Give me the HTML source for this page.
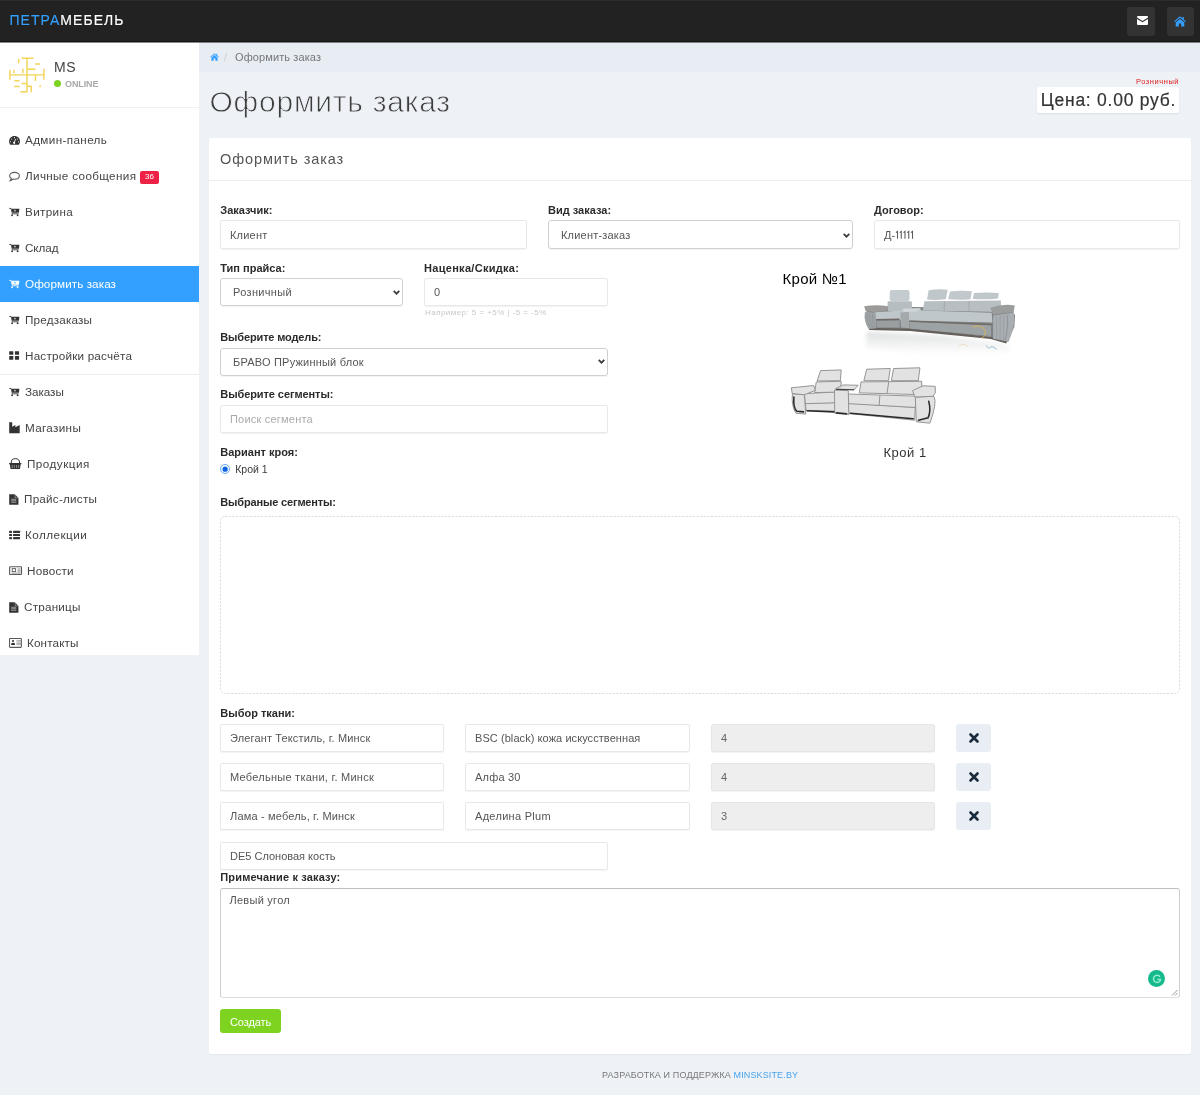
<!DOCTYPE html>
<html lang="ru">
<head>
<meta charset="utf-8">
<title>Оформить заказ</title>
<style>
*{box-sizing:border-box;margin:0;padding:0}
html,body{width:1200px;height:1095px;overflow:hidden}
body{font-family:"Liberation Sans",sans-serif;background:#eef2f6;color:#444;position:relative;font-size:12px}
.abs{position:absolute}
svg{position:absolute;overflow:visible}
.t{position:absolute;white-space:nowrap}
#nav{left:0;top:0;width:1200px;height:42px;background:#222;border-bottom:1px solid #151515;border-top:1px solid #2b2b2b}
#brand{left:9.400px;top:12px;font-size:14px;color:#fff;letter-spacing:1.050px;-webkit-text-stroke:.15px;line-height:16px;white-space:nowrap}
#brand b{font-weight:400;color:#33a0ff}
.nbtn{top:7px;width:28px;height:29px;background:#333;border-radius:3px}
#side{left:0;top:42px;width:199px;height:613px;background:#fff}
#crumb{left:199px;top:42px;width:1001px;height:29px;background:#e8ecf3;border-bottom:1px solid #ebeff5;height:30px}
#title{left:209.500px;top:84px;font-size:30px;line-height:36px;color:#3d3d3d;-webkit-text-stroke:.8px #eef2f6;white-space:nowrap;font-weight:400;letter-spacing:.75px}
#card{left:209px;top:138px;width:982px;height:916px;background:#fff;border-radius:2px;box-shadow:0 1px 1px rgba(0,0,0,.05)}
#cardh{left:0;top:0;width:982px;height:43px;border-bottom:1px solid #eee}
.mt{font-size:11.700px;line-height:14px}
.lbl{position:absolute;font-weight:700;font-size:11px;color:#2b2b2b;white-space:nowrap;line-height:14px;left:220.300px}
.inp{position:absolute;background:#fff;border:1px solid #e8e8e8;border-radius:2px;height:28px;font-size:11px;line-height:26px;color:#555;padding-left:9px;white-space:nowrap;box-shadow:0 1px 1px rgba(0,0,0,.05)}
.inp.dis{background:#eee;border-color:#e6e6e6;color:#666}
.inp.sel{border-color:#d0d0d0;padding-left:12px;border-radius:3px}
.xb{position:absolute;left:956px;width:35px;height:28px;background:#e9edf4;border-radius:3px}
#w{position:absolute;left:0;top:0;width:1200px;height:1095px;will-change:transform}
</style>
</head>
<body>
<div id="w">
<div id="nav" class="abs"></div>
<div class="abs" style="left:0;top:42px;width:1200px;height:1px;background:rgba(20,20,20,.5);z-index:3"></div>
<div id="brand" class="abs"><b>ПЕТРА</b>МЕБЕЛЬ</div>
<div class="abs nbtn" style="left:1127px"></div>
<div class="abs nbtn" style="left:1167px;width:27px"></div>
<svg style="left:1137px;top:16px" width="11" height="9" viewBox="0 0 11 9"><path d="M1 0h9a1 1 0 0 1 1 1v.6L5.5 5 0 1.600V1a1 1 0 0 1 1-1zM0 2.900l5.500 3.400L11 2.900V8a1 1 0 0 1-1 1H1a1 1 0 0 1-1-1z" fill="#fff"/></svg>
<svg style="left:1174px;top:15.600px" width="12" height="11" viewBox="0 0 12 11"><path d="M6 0.300L0.200 5.300l.7.800L6 1.800l5.100 4.300.7-.8L9.800 3.600V1H8.400v1.400zM6 2.900L1.700 6.500V10.500h3.100V7.400h2.400v3.100h3.100V6.500z" fill="#33a0ff"/></svg>

<div id="side" class="abs"></div>
<div class="abs" style="left:0;top:107px;width:199px;height:1px;background:#f0f0f0"></div>
<div class="abs" style="left:0;top:374px;width:199px;height:1px;background:#ececec"></div>
<!-- avatar -->
<svg style="left:4px;top:52px" width="48" height="46" viewBox="0 0 1143 1095" fill="none" stroke="#f0cd3a" stroke-width="34" opacity=".85">
<path d="M130 545H970M548 150V960M420 150H700M140 420V660M235 420V500M450 400V500M350 160V270M950 400V660M750 560V690M740 285H860M550 410H750M250 685H370M420 750H540M240 820H370M390 945H560M550 815H660M650 815V960M860 790V840"/>
</svg>
<div class="t" id="uname" style="left:54px;top:58px;font-size:14px;line-height:18px;color:#444;letter-spacing:.6px">MS</div>
<div class="abs" style="left:53.500px;top:80px;width:7px;height:7px;border-radius:50%;background:#7ed321"></div>
<div class="t" id="uonl" style="left:65px;top:77.600px;font-size:9px;line-height:12px;font-weight:700;color:#aaa;letter-spacing:-.1px">ONLINE</div>

<svg style="left:4px;top:128.0px" width="30" height="24" viewBox="0 0 1200 960"><path d="M420 322C290 322 205 420 205 530C205 590 225 640 250 668H590C615 640 640 590 640 530C640 420 550 322 420 322Z" fill="#333"/><g fill="#fff"><circle cx="420" cy="385" r="22"/><circle cx="305" cy="440" r="22"/><circle cx="535" cy="440" r="22"/><circle cx="262" cy="550" r="24"/><circle cx="578" cy="550" r="24"/><path d="M480 450L432 560A42 42 0 1 1 400 552L452 440Z"/></g></svg>
<div class="t mt" style="left:25px;top:133.4px;letter-spacing:0.37px;color:#444">Админ-панель</div>
<svg style="left:4px;top:164.0px" width="30" height="24" viewBox="0 0 1200 960"><path d="M420 335C535 335 615 398 615 470C615 545 535 608 420 608C395 608 372 605 350 600C320 640 290 665 245 672C270 640 285 610 290 575C245 548 225 512 225 470C225 398 305 335 420 335Z" fill="none" stroke="#5a5a5a" stroke-width="44"/></svg>
<div class="t mt" style="left:25px;top:169.3px;letter-spacing:0.34px;color:#444">Личные сообщения</div>
<svg style="left:4px;top:200.0px" width="30" height="24" viewBox="0 0 1200 960"><path d="M300 345H615L598 505H338Z" fill="#333"/><path d="M208 332L285 342L335 552H580" fill="none" stroke="#333" stroke-width="34"/><circle cx="322" cy="610" r="36" fill="#333"/><circle cx="545" cy="610" r="36" fill="#333"/><path d="M395 425H480M437 385V465" stroke="#fff" stroke-width="24" opacity=".85"/></svg>
<div class="t mt" style="left:25px;top:205.2px;letter-spacing:0.35px;color:#444">Витрина</div>
<svg style="left:4px;top:235.9px" width="30" height="24" viewBox="0 0 1200 960"><path d="M300 345H615L598 505H338Z" fill="#333"/><path d="M208 332L285 342L335 552H580" fill="none" stroke="#333" stroke-width="34"/><circle cx="322" cy="610" r="36" fill="#333"/><circle cx="545" cy="610" r="36" fill="#333"/><path d="M395 425H480M437 385V465" stroke="#fff" stroke-width="24" opacity=".85"/></svg>
<div class="t mt" style="left:25px;top:241.1px;letter-spacing:-0.09px;color:#444">Склад</div>
<div class="abs" style="left:0;top:266px;width:199px;height:36px;background:#33a0ff"></div>
<svg style="left:4px;top:271.8px" width="30" height="24" viewBox="0 0 1200 960"><path d="M300 345H615L598 505H338Z" fill="#fff"/><path d="M208 332L285 342L335 552H580" fill="none" stroke="#fff" stroke-width="34"/><circle cx="322" cy="610" r="36" fill="#fff"/><circle cx="545" cy="610" r="36" fill="#fff"/><path d="M395 425H480M437 385V465" stroke="#33a0ff" stroke-width="24" opacity=".85"/></svg>
<div class="t mt" style="left:25px;top:277.0px;letter-spacing:0.08px;color:#fff">Оформить заказ</div>
<svg style="left:4px;top:307.7px" width="30" height="24" viewBox="0 0 1200 960"><path d="M300 345H615L598 505H338Z" fill="#333"/><path d="M208 332L285 342L335 552H580" fill="none" stroke="#333" stroke-width="34"/><circle cx="322" cy="610" r="36" fill="#333"/><circle cx="545" cy="610" r="36" fill="#333"/><path d="M395 425H480M437 385V465" stroke="#fff" stroke-width="24" opacity=".85"/></svg>
<div class="t mt" style="left:25px;top:312.9px;letter-spacing:0.18px;color:#444">Предзаказы</div>
<svg style="left:4px;top:344.0px" width="30" height="24" viewBox="0 0 1200 960"><g fill="#333"><rect x="207" y="287" width="165" height="146" rx="14"/><rect x="438" y="287" width="165" height="146" rx="14"/><rect x="207" y="482" width="165" height="146" rx="14"/><rect x="438" y="482" width="165" height="146" rx="14"/></g></svg>
<div class="t mt" style="left:25px;top:348.8px;letter-spacing:0.21px;color:#444">Настройки расчёта</div>
<svg style="left:4px;top:379.5px" width="30" height="24" viewBox="0 0 1200 960"><path d="M300 345H615L598 505H338Z" fill="#333"/><path d="M208 332L285 342L335 552H580" fill="none" stroke="#333" stroke-width="34"/><circle cx="322" cy="610" r="36" fill="#333"/><circle cx="545" cy="610" r="36" fill="#333"/><path d="M395 425H480M437 385V465" stroke="#fff" stroke-width="24" opacity=".85"/></svg>
<div class="t mt" style="left:25px;top:384.7px;letter-spacing:-0.05px;color:#444">Заказы</div>
<svg style="left:4px;top:415.0px" width="30" height="24" viewBox="0 0 1200 960"><path d="M208 292H328V472L455 398V492L628 402V726H208Z" fill="#333"/></svg>
<div class="t mt" style="left:25px;top:420.6px;letter-spacing:0.33px;color:#444">Магазины</div>
<svg style="left:4px;top:451.0px" width="30" height="24" viewBox="0 0 1200 960"><path d="M292 480Q280 305 455 305Q630 305 622 480" fill="none" stroke="#333" stroke-width="40"/><path d="M205 478H695V532H668L638 716H262L232 532H205Z" fill="#333"/><path d="M330 560V680M410 560V680M500 560V680M585 560V680" stroke="#fff" stroke-width="30" opacity=".55"/></svg>
<div class="t mt" style="left:27px;top:456.5px;letter-spacing:0.47px;color:#444">Продукция</div>
<svg style="left:4px;top:487.0px" width="30" height="24" viewBox="0 0 1200 960"><path d="M208 285H435L578 440V712H208Z" fill="#333"/><path d="M445 300V430H565" fill="none" stroke="#fff" stroke-width="22" opacity=".7"/><path d="M285 490H490M285 550H490M285 610H490" stroke="#fff" stroke-width="34" opacity=".6"/></svg>
<div class="t mt" style="left:24px;top:492.4px;letter-spacing:0.23px;color:#444">Прайс-листы</div>
<svg style="left:4px;top:523.0px" width="30" height="24" viewBox="0 0 1200 960"><g fill="#333"><rect x="205" y="312" width="115" height="88" rx="18"/><rect x="360" y="312" width="282" height="88" rx="18"/><rect x="205" y="435" width="115" height="88" rx="18"/><rect x="360" y="435" width="282" height="88" rx="18"/><rect x="205" y="558" width="115" height="88" rx="18"/><rect x="360" y="558" width="282" height="88" rx="18"/></g></svg>
<div class="t mt" style="left:25px;top:528.3px;letter-spacing:0.46px;color:#444">Коллекции</div>
<svg style="left:4px;top:559.0px" width="30" height="24" viewBox="0 0 1200 960"><rect x="225" y="310" width="475" height="310" rx="30" fill="none" stroke="#5a5a5a" stroke-width="46"/><rect x="330" y="385" width="135" height="120" fill="none" stroke="#5a5a5a" stroke-width="36"/><path d="M540 395H660M540 455H660M540 515H660M300 565H660" stroke="#5a5a5a" stroke-width="30" opacity=".8"/></svg>
<div class="t mt" style="left:27px;top:564.2px;letter-spacing:0.22px;color:#444">Новости</div>
<svg style="left:4px;top:594.7px" width="30" height="24" viewBox="0 0 1200 960"><path d="M208 285H435L578 440V712H208Z" fill="#333"/><path d="M445 300V430H565" fill="none" stroke="#fff" stroke-width="22" opacity=".7"/><path d="M285 490H490M285 550H490M285 610H490" stroke="#fff" stroke-width="34" opacity=".6"/></svg>
<div class="t mt" style="left:24px;top:600.1px;letter-spacing:0.21px;color:#444">Страницы</div>
<svg style="left:4px;top:631.0px" width="30" height="24" viewBox="0 0 1200 960"><rect x="222" y="300" width="472" height="355" rx="24" fill="none" stroke="#5a5a5a" stroke-width="42"/><circle cx="362" cy="398" r="42" fill="#333"/><path d="M285 555V515Q285 470 362 470Q440 470 440 515V555Z" fill="#333"/><path d="M495 385H675M495 440H675M495 495H675M495 545H675" stroke="#5a5a5a" stroke-width="30" opacity=".7"/></svg>
<div class="t mt" style="left:27px;top:636.0px;letter-spacing:0.13px;color:#444">Контакты</div>
<div class="abs" style="left:140px;top:170.500px;width:19px;height:13px;background:#ee2244;border-radius:2px"></div>
<div class="t" style="left:140px;top:172px;width:19px;text-align:center;font-size:8px;line-height:10px;color:#fff">36</div>

<div id="crumb" class="abs"></div>
<svg style="left:210px;top:53px" width="9" height="8" viewBox="0 0 12 11"><path d="M6 0.300L0.200 5.300l.7.800L6 1.800l5.100 4.300.7-.8L9.800 3.600V1H8.400v1.400zM6 2.900L1.700 6.500V10.500h3.100V7.400h2.400v3.100h3.100V6.500z" fill="#33a0ff"/></svg>
<div class="t" style="left:224px;top:50px;font-size:11px;line-height:14px;color:#ccc">/</div>
<div class="t" id="crt" style="left:235px;top:50px;font-size:11px;line-height:14px;color:#777;letter-spacing:.1px">Оформить заказ</div>
<div id="title" class="abs">Оформить заказ</div>

<div class="t" id="rozn" style="left:1136px;top:76.700px;font-size:7.500px;line-height:9px;color:#e02020;letter-spacing:.55px">Розничный</div>
<div class="abs" id="pricebox" style="left:1037px;top:87px;width:142px;height:26px;background:#fff;border-radius:2px;box-shadow:0 1px 2px rgba(0,0,0,.08)"></div>
<div class="t" id="price" style="left:1040.800px;top:89.300px;font-size:17.500px;line-height:22px;color:#333;letter-spacing:.75px;-webkit-text-stroke:.2px #333">Цена: 0.00 руб.</div>

<div id="card" class="abs">
  <div id="cardh" class="abs"></div>
</div>
<div class="t" id="cht" style="left:220px;top:150px;font-size:14.500px;line-height:18px;color:#555;letter-spacing:.9px">Оформить заказ</div>
<!-- row 1 -->
<div class="lbl" style="top:203px">Заказчик:</div>
<div class="inp" style="height:29px;line-height:28px;left:220px;top:220px;width:306.500px;letter-spacing:0.2px">Клиент</div>
<div class="lbl" style="left:548px;top:203px">Вид заказа:</div>
<div class="inp sel" style="height:29px;line-height:28px;left:548px;top:220px;width:305px;letter-spacing:0.2px">Клиент-заказ</div>
<svg class="chev" style="left:843px;top:233px" width="7" height="5" viewBox="0 0 7 5"><path d="M.7.900L3.500 3.700 6.300.900" fill="none" stroke="#3a3a3a" stroke-width="1.700"/></svg>
<div class="lbl" style="left:874px;top:203px">Договор:</div>
<div class="inp" style="height:29px;line-height:28px;left:874px;top:220px;width:306px;letter-spacing:0px">Д-<span style="color:transparent;letter-spacing:-1.750px">11111</span></div>
<svg style="left:895px;top:231px" width="20" height="8" viewBox="0 0 20 8"><path d="M1.0 1.600L2.5 .3V7.700M4.75 1.600L6.25 .3V7.700M8.5 1.600L10 .3V7.700M12.25 1.600L13.75 .3V7.700M16.0 1.600L17.5 .3V7.700" fill="none" stroke="#5a5a5a" stroke-width="1.050" stroke-linejoin="miter"/></svg>
<!-- row 2 -->
<div class="lbl" style="top:260.500px">Тип прайса:</div>
<div class="inp sel" style="left:220px;top:278px;width:183px;letter-spacing:0.33px">Розничный</div>
<svg class="chev" style="left:393px;top:290px" width="7" height="5" viewBox="0 0 7 5"><path d="M.7.900L3.500 3.700 6.300.900" fill="none" stroke="#3a3a3a" stroke-width="1.700"/></svg>
<div class="lbl" style="left:424px;top:260.500px;letter-spacing:0.3px">Наценка/Скидка:</div>
<div class="inp" style="left:424px;top:278px;width:184px">0</div>
<div class="t" style="left:425px;top:308px;font-size:8px;line-height:10px;color:#c8c8c8;letter-spacing:.45px">Например: 5 = +5% | -5 = -5%</div>
<!-- row 3 -->
<div class="lbl" style="top:330px;letter-spacing:-0.15px">Выберите модель:</div>
<div class="inp sel" style="left:220px;top:348px;width:388px;letter-spacing:0.21px">БРАВО ПРужинный блок</div>
<svg class="chev" style="left:597.500px;top:359px" width="7" height="5" viewBox="0 0 7 5"><path d="M.7.900L3.500 3.700 6.300.900" fill="none" stroke="#3a3a3a" stroke-width="1.700"/></svg>
<!-- row 4 -->
<div class="lbl" style="top:387.100px;letter-spacing:-0.08px">Выберите сегменты:</div>
<div class="inp" style="left:220px;top:405px;width:388px;color:#aaa;letter-spacing:0.21px">Поиск сегмента</div>
<!-- row 5 -->
<div class="lbl" style="top:445px">Вариант кроя:</div>
<div class="abs" style="left:220px;top:464px;width:10px;height:10px;border-radius:50%;border:1.500px solid #62a6f4;background:#fff"></div>
<svg style="left:220px;top:464px" width="10" height="10" viewBox="0 0 10 10"><circle cx="5.100" cy="5.200" r="2.600" fill="#0d63e0"/></svg>
<div class="t" style="left:235.300px;top:461.700px;font-size:10.500px;line-height:14px;color:#3a3a3a;letter-spacing:-.05px">Крой 1</div>
<!-- selected -->
<div class="lbl" style="top:495.100px;letter-spacing:-0.16px">Выбраные сегменты:</div>
<svg style="left:220px;top:516px" width="960" height="178" viewBox="0 0 960 178"><rect x=".5" y=".5" width="959" height="177" rx="4.500" fill="none" stroke="#dcdcdc" stroke-width="1" stroke-dasharray="2.200 1.400"/></svg>
<!-- fabrics -->
<div class="lbl" style="top:706px">Выбор ткани:</div>
<div class="inp" style="left:220px;top:724px;width:224px;letter-spacing:0.14px">Элегант Текстиль, г. Минск</div>
<div class="inp" style="left:465px;top:724px;width:225px;letter-spacing:0.07px">BSC (black) кожа искусственная</div>
<div class="inp dis" style="left:711px;top:724px;width:224px">4</div>
<div class="xb" style="top:724px"></div>
<div class="inp" style="left:220px;top:763px;width:224px;letter-spacing:0.26px">Мебельные ткани, г. Минск</div>
<div class="inp" style="left:465px;top:763px;width:225px;letter-spacing:0.2px">Алфа 30</div>
<div class="inp dis" style="left:711px;top:763px;width:224px">4</div>
<div class="xb" style="top:763px"></div>
<div class="inp" style="left:220px;top:802px;width:224px;letter-spacing:0.17px">Лама - мебель, г. Минск</div>
<div class="inp" style="left:465px;top:802px;width:225px;letter-spacing:0.3px">Аделина Plum</div>
<div class="inp dis" style="left:711px;top:802px;width:224px">3</div>
<div class="xb" style="top:802px"></div>
<svg style="left:968.500px;top:733px" width="10" height="10" viewBox="0 0 10 10"><path d="M1.500 1.500l7 7M8.500 1.500l-7 7" stroke="#1a2b3c" stroke-width="2.600" stroke-linecap="round"/></svg>
<svg style="left:968.500px;top:772px" width="10" height="10" viewBox="0 0 10 10"><path d="M1.500 1.500l7 7M8.500 1.500l-7 7" stroke="#1a2b3c" stroke-width="2.600" stroke-linecap="round"/></svg>
<svg style="left:968.500px;top:811px" width="10" height="10" viewBox="0 0 10 10"><path d="M1.500 1.500l7 7M8.500 1.500l-7 7" stroke="#1a2b3c" stroke-width="2.600" stroke-linecap="round"/></svg>
<div class="inp" style="left:220px;top:842px;width:388px;letter-spacing:0px">DE5 Слоновая кость</div>
<!-- note -->
<div class="lbl" style="top:870px;letter-spacing:0.15px">Примечание к заказу:</div>
<div class="abs" style="left:220px;top:888px;width:960px;height:110px;border:1px solid #cfcfcf;border-top-color:#bfbfbf;border-bottom-color:#dedede;border-radius:3px;background:#fff"></div>
<div class="t" style="left:229.500px;top:893px;font-size:11px;line-height:14px;color:#555;letter-spacing:.26px">Левый угол</div>
<div class="abs" style="left:1148px;top:970px;width:17px;height:17px;border-radius:50%;background:#16b98b"></div>
<svg style="left:1151.500px;top:973.500px" width="10" height="10" viewBox="0 0 10 10"><path d="M8 2.800A3.600 3.600 0 1 0 8.600 5.600H5.400" fill="none" stroke="#8fefd0" stroke-width="1.500"/></svg>
<svg style="left:1171px;top:989px" width="7" height="7" viewBox="0 0 7 7"><path d="M6.500 1L1 6.500M6.500 4L4 6.500" stroke="#999" stroke-width="1"/></svg>
<!-- button -->
<div class="abs" style="left:220px;top:1009px;width:61px;height:24px;background:#7ed321;border-radius:3px"></div>
<div class="t" style="left:230px;top:1014.500px;font-size:11px;line-height:14px;color:#fff;letter-spacing:-.1px">Создать</div>
<!-- footer -->
<div class="t" id="foot" style="left:602px;top:1068.700px;font-size:9px;line-height:12px;color:#777;letter-spacing:.13px">РАЗРАБОТКА И ПОДДЕРЖКА <span style="color:#4aa3ec">MINSKSITE.BY</span></div>
<div class="t" id="kroyn" style="left:782.500px;top:269.500px;font-size:15px;line-height:18px;color:#000;letter-spacing:.3px">Крой №1</div>
<svg style="left:855px;top:280px" width="170" height="85" viewBox="0 0 1200 600">
<defs>
<filter id="b1" x="-5%" y="-5%" width="110%" height="110%"><feGaussianBlur stdDeviation="4"/></filter>
<filter id="b2" x="-5%" y="-20%" width="110%" height="140%"><feGaussianBlur stdDeviation="14"/></filter>
<linearGradient id="rf" x1="0" y1="0" x2="0" y2="1"><stop offset="0" stop-color="#cfd2d3" stop-opacity=".75"/><stop offset="1" stop-color="#e8e9e9" stop-opacity="0"/></linearGradient>
</defs>
<g filter="url(#b2)"><path d="M80 365L640 395 1080 455 1110 520 600 540 80 480z" fill="url(#rf)"/></g>
<g filter="url(#b1)">
<!-- base dark -->
<path d="M85 230L150 340 960 400 1075 440 1125 330 1130 250 1100 190 960 200 400 190 70 185z" fill="#7f8283"/>
<!-- left headrest -->
<rect x="245" y="70" width="140" height="78" rx="14" fill="#c5ccd0"/>
<rect x="230" y="150" width="172" height="68" rx="8" fill="#b5bdc1"/>
<!-- right headrests -->
<path d="M520 72Q590 60 655 68L640 135Q570 145 508 138z" fill="#bfc7cb"/>
<path d="M670 82Q750 72 825 80L815 135Q735 142 658 136z" fill="#c2c9cd"/>
<path d="M840 92Q930 84 1015 92L1010 130Q920 140 832 134z" fill="#c0c7cb"/>
<!-- right back -->
<path d="M490 150L1030 145 1030 225 478 215z" fill="#b7bfc3"/>
<path d="M630 150v68M805 148v74" stroke="#9aa2a6" stroke-width="5"/>
<!-- seat -->
<path d="M140 228L330 215 345 200 460 200 470 215 965 232 970 300 380 285 145 275z" fill="#c0c7ca"/>
<!-- console -->
<path d="M320 230L380 225 385 340 325 335z" fill="#a4a9ab"/>
<path d="M335 205L460 200 440 222 345 225z" fill="#cfd5d8"/>
<!-- lower front panels -->
<path d="M150 285L315 282 315 335 155 335z" fill="#999ea0"/>
<path d="M385 295L960 320 960 395 390 345z" fill="#9da2a4"/>
<path d="M385 290L965 315" stroke="#6f6965" stroke-width="10"/>
<path d="M150 280L315 278" stroke="#6f6965" stroke-width="11"/>
<path d="M100 345L390 352 960 408 1070 440" stroke="#66615d" stroke-width="16" fill="none"/>
<!-- left arm -->
<path d="M65 185Q150 170 235 185L225 215 145 228 75 220z" fill="#9c9b99"/>
<path d="M70 225L145 230 150 340 95 345Q60 290 70 225z" fill="#9ea3a5"/>
<!-- right arm -->
<path d="M955 195Q1050 165 1128 180L1120 225 975 245z" fill="#9b9c9c"/>
<path d="M975 250L1120 230Q1140 300 1085 435L975 415z" fill="#a8aeb1"/>
<path d="M1075 250Q1085 330 1060 425" stroke="#8a8f92" stroke-width="6" fill="none"/>
<path d="M85 240Q80 300 110 340M105 240Q100 300 125 340M125 240Q122 300 140 338" stroke="#8d9295" stroke-width="5" fill="none"/><path d="M1000 255V415M1025 250V422M1050 248V428" stroke="#969b9e" stroke-width="5" fill="none"/>
<!-- logo arc -->
<path d="M830 330Q900 310 920 360Q925 400 890 410" stroke="#e6b84a" stroke-width="7" fill="none" opacity=".8"/>
</g>
<g filter="url(#b1)" opacity=".55">
<path d="M730 470Q760 440 800 470" stroke="#e6c98a" stroke-width="6" fill="none"/>
<path d="M925 460q15 30 30 15t45 15" stroke="#7bb0c8" stroke-width="8" fill="none"/>
</g>
</svg>
<svg style="left:780px;top:360px" width="170" height="70" viewBox="0 0 1200 494">
<defs><filter id="b3" x="-5%" y="-5%" width="110%" height="110%"><feGaussianBlur stdDeviation="2.500"/></filter></defs>
<g filter="url(#b3)" fill="#e2e2e2" stroke="#8e8e8e" stroke-width="6.500" stroke-linejoin="round">
<!-- right base & seat -->
<path d="M480 305L955 335 950 425 485 378z"/>
<path d="M480 240L965 255 955 335 480 308z"/>
<path d="M705 248L700 320" fill="none"/>
<!-- right back -->
<path d="M572 155L1000 150 1002 245 560 232z"/>
<path d="M768 152L755 238" fill="none"/>
<path d="M612 65L778 60 766 146 592 146z"/>
<path d="M802 60L988 55 976 146 786 146z"/>
<!-- left seat/base -->
<path d="M178 305L390 300 388 362 185 358z"/>
<path d="M172 238L392 225 392 302 178 308z"/>
<path d="M256 155L432 150 428 226 244 230z"/>
<path d="M286 75L432 70 426 146 262 148z"/>
<!-- console -->
<path d="M385 212L482 216 486 386 386 376z"/>
<path d="M392 203L445 176 552 178 522 212z"/>
<!-- left arm -->
<path d="M88 238L172 245 182 382 112 376Q78 320 88 238z"/>
<path d="M80 196L238 180 250 214 172 246 86 236z"/>
<!-- right arm -->
<path d="M955 262L1086 256Q1112 300 1058 446L962 436z"/>
<path d="M936 216L1010 182 1096 186 1096 232 1080 256 952 262z"/>
</g>
<g filter="url(#b3)" fill="none" stroke="#2a2a2a" stroke-linecap="round">
<path d="M98 262Q92 340 120 362L166 366" stroke-width="11"/>
<path d="M192 358L380 366" stroke-width="11"/>
<path d="M398 373L470 379" stroke-width="11"/>
<path d="M497 376L940 414" stroke-width="11"/>
<path d="M1050 292Q1068 360 1045 408L978 426" stroke-width="11"/>
<path d="M398 208L520 210" stroke-width="6"/>
</g>
</svg>
<div class="t" id="kroy1" style="left:883.500px;top:444.600px;font-size:13px;line-height:16px;color:#333;letter-spacing:.5px">Крой 1</div>


</div>
</body>
</html>
